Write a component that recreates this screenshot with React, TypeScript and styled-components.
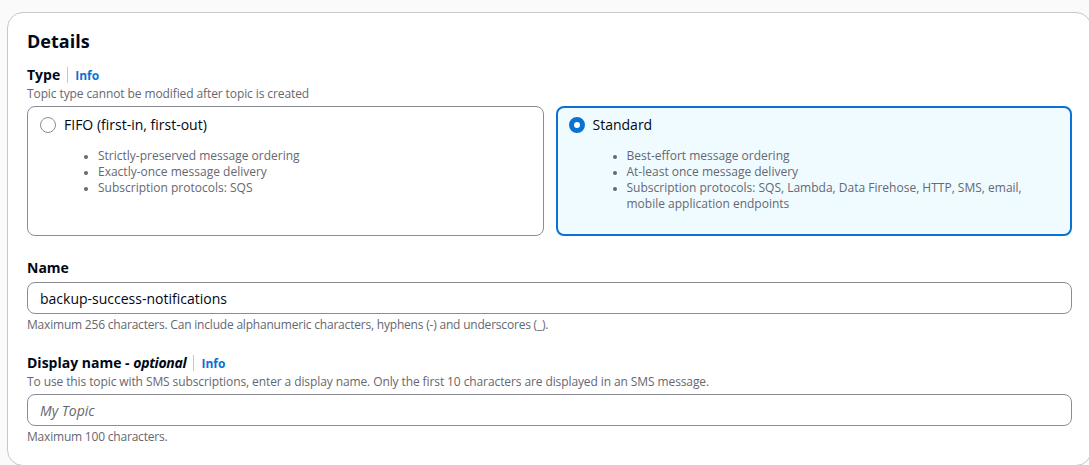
import React from 'react'
import styled, { createGlobalStyle } from 'styled-components'

const GlobalStyle = createGlobalStyle`
  html, body {
    margin: 0;
    padding: 0;
    background: #fafafa;
    font-family: "Open Sans", "Noto Sans", Arial, sans-serif;
    color: #000716;
  }
`

const Page = styled.div`
  padding: 12px 0 0 7px;
  height: 465px;
  box-sizing: border-box;
  overflow: hidden;
`

const Card = styled.section`
  width: 1085px;
  box-sizing: border-box;
  background: #ffffff;
  border: 1px solid #c6c6cd;
  border-radius: 16px;
  padding: 17px 19px 20px 19px;
`

const Heading = styled.h2`
  margin: 0;
  font-size: 18px;
  line-height: 22px;
  font-weight: 700;
`

const Field = styled.div<{ gap: number }>`
  margin-top: ${({ gap }) => gap}px;
`

const LabelRow = styled.div`
  display: flex;
  align-items: center;
  height: 20px;
`

const Label = styled.span`
  font-size: 14px;
  line-height: 20px;
  font-weight: 700;
  em {
    font-style: italic;
    letter-spacing: -0.3px;
  }
`

const InfoLink = styled.a`
  display: inline-flex;
  align-items: center;
  margin-left: 7px;
  padding-left: 7px;
  border-left: 1px solid #c6c6cd;
  height: 16px;
  font-size: 12px;
  font-weight: 700;
  color: #0972d3;
  text-decoration: none;
`

const Description = styled.div`
  font-size: 12px;
  line-height: 16px;
  letter-spacing: -0.1px;
  color: #656871;
  margin-top: 1px;
`

const Hint = styled.div`
  font-size: 12px;
  line-height: 16px;
  letter-spacing: -0.2px;
  color: #656871;
  margin-top: 3px;
`

const Tiles = styled.div`
  display: grid;
  grid-template-columns: 1fr 1fr;
  gap: 12px;
  margin-top: 4px;
`

const Tile = styled.div<{ selected?: boolean }>`
  height: 130px;
  box-sizing: border-box;
  border-radius: 8px;
  border: ${({ selected }) => (selected ? '2px solid #0972d3' : '1px solid #8c8c94')};
  background: ${({ selected }) => (selected ? '#f0fbff' : '#ffffff')};
  padding: ${({ selected }) => (selected ? '7px 11px' : '8px 12px')};
`

const TileHead = styled.div`
  display: flex;
  align-items: center;
  gap: 8px;
  height: 20px;
  font-size: 14px;
  line-height: 20px;
`

const Radio = styled.span<{ checked?: boolean }>`
  width: 16px;
  height: 16px;
  box-sizing: border-box;
  border-radius: 50%;
  flex-shrink: 0;
  border: ${({ checked }) => (checked ? '5px solid #0972d3' : '1px solid #8c8c94')};
  background: #ffffff;
`

const Bullets = styled.ul`
  margin: 13px 0 0 0;
  padding-left: 58px;
  padding-right: 30px;
  font-size: 12px;
  line-height: 16px;
  color: #656871;
  li::marker {
    font-size: 10px;
  }
`

const Input = styled.input`
  display: block;
  width: 100%;
  height: 32px;
  box-sizing: border-box;
  margin-top: 4px;
  border: 1px solid #8c8c94;
  border-radius: 8px;
  padding: 0 12px;
  font-family: inherit;
  font-size: 14px;
  color: #000716;
  background: #ffffff;
  outline: none;
  &::placeholder {
    color: #656871;
    font-style: italic;
  }
`

const Info = () => <InfoLink href="#">Info</InfoLink>

const App: React.FC = () => {
  return (
    <Page>
      <GlobalStyle />
      <Card>
        <Heading>Details</Heading>

        <Field gap={13}>
          <LabelRow>
            <Label>Type</Label>
            <Info />
          </LabelRow>
          <Description>Topic type cannot be modified after topic is created</Description>
          <Tiles>
            <Tile>
              <TileHead>
                <Radio />
                FIFO (first-in, first-out)
              </TileHead>
              <Bullets>
                <li>Strictly-preserved message ordering</li>
                <li>Exactly-once message delivery</li>
                <li>Subscription protocols: SQS</li>
              </Bullets>
            </Tile>
            <Tile selected>
              <TileHead>
                <Radio checked />
                Standard
              </TileHead>
              <Bullets>
                <li>Best-effort message ordering</li>
                <li>At-least once message delivery</li>
                <li>Subscription protocols: SQS, Lambda, Data Firehose, HTTP, SMS, email, mobile application endpoints</li>
              </Bullets>
            </Tile>
          </Tiles>
        </Field>

        <Field gap={22}>
          <LabelRow>
            <Label>Name</Label>
          </LabelRow>
          <Input defaultValue="backup-success-notifications" />
          <Hint>Maximum 256 characters. Can include alphanumeric characters, hyphens (-) and underscores (_).</Hint>
        </Field>

        <Field gap={20}>
          <LabelRow>
            <Label>
              Display name - <em>optional</em>
            </Label>
            <Info />
          </LabelRow>
          <Description>
            To use this topic with SMS subscriptions, enter a display name. Only the first 10 characters are displayed in an SMS message.
          </Description>
          <Input placeholder="My Topic" />
          <Hint>Maximum 100 characters.</Hint>
        </Field>
      </Card>
    </Page>
  )
}

export default App
